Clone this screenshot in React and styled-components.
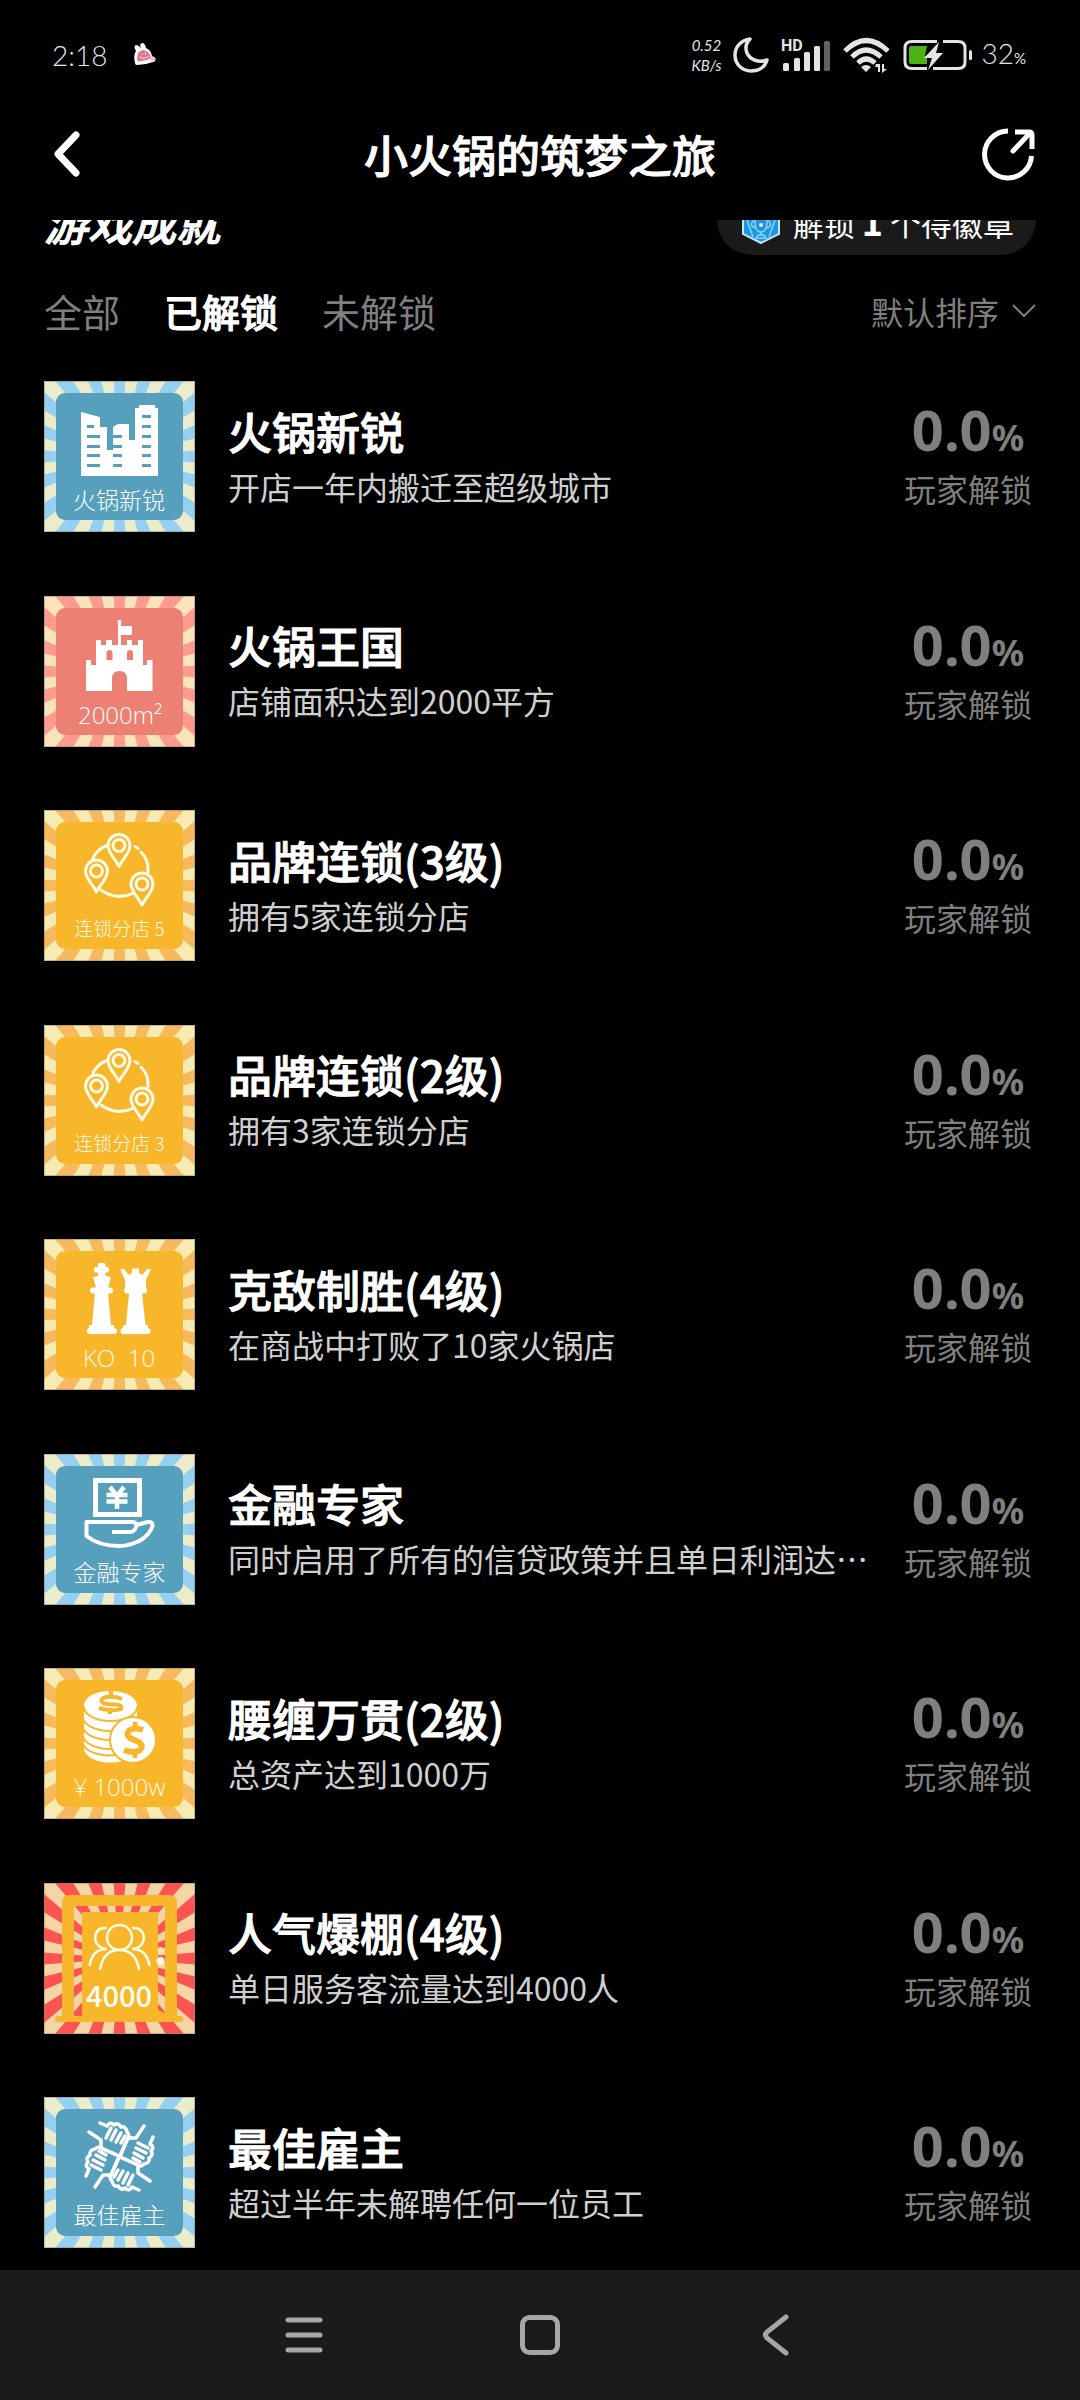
import React from "react";
import styled, { createGlobalStyle, css } from "styled-components";

const CJK = '"Noto Sans CJK SC", sans-serif';

const GlobalStyle = createGlobalStyle`
  * { box-sizing: border-box; }
  body { margin: 0; background: #000; color: #fff; font-family: ${CJK}; }
  button { border: 0; padding: 0; background: none; color: inherit; font: inherit; cursor: pointer; }
  svg { display: block; flex: none; }
`;

const heavy = css`
  font-weight: 500;
  -webkit-text-stroke: 1px currentColor;
`;

const Page = styled.div`
  min-height: 100vh;
  display: flex;
  flex-direction: column;
`;

/* ---------- status bar ---------- */
const StatusBar = styled.div`
  height: 110px;
  padding: 0 54px 0 52px;
  display: flex;
  align-items: center;
  color: #e4e4e4;
  font-family: Lato, sans-serif;
  font-weight: 300;
`;
const Clock = styled.time`
  font-size: 28px;
  line-height: 32px;
  margin-right: 26px;
`;
const StatusIcons = styled.div`
  margin-left: auto;
  display: flex;
  align-items: center;
  gap: 12px;
`;
const Speed = styled.div`
  font-size: 15px;
  line-height: 20px;
  font-style: italic;
  text-align: center;
  font-weight: 400;
`;
const BatteryGroup = styled.div`
  display: flex;
  align-items: center;
  gap: 8px;
`;
const BatteryText = styled.div`
  font-size: 28px;
  line-height: 32px;
  small { font-size: 15px; font-weight: 400; }
`;

/* ---------- title bar ---------- */
const TitleBar = styled.header`
  height: 110px;
  padding: 0 44px 22px;
  display: grid;
  grid-template-columns: 56px 1fr 56px;
  align-items: center;
`;
const Title = styled.h1`
  margin: 0;
  text-align: center;
  font-size: 44px;
  line-height: 64px;
  ${heavy}
`;
const IconButton = styled.button`
  display: flex;
  height: 56px;
  align-items: center;
  justify-content: ${(p) => p.$align};
`;

/* ---------- scrolled content ---------- */
const Scroller = styled.main`
  flex: 1;
  overflow: hidden;
  display: flex;
  flex-direction: column;
  padding: 0 44px 22px;
`;
const SectionHead = styled.div`
  height: 70px;
  margin-top: -35px;
  display: flex;
  align-items: center;
  justify-content: space-between;
`;
const SectionTitle = styled.h2`
  margin: 0;
  padding-top: 4px;
  font-size: 44px;
  line-height: 64px;
  font-style: italic;
  ${heavy}
`;
const BadgePill = styled.button`
  height: 70px;
  padding: 3px 22px 0 25px;
  border-radius: 35px;
  background: #1a1a1a;
  display: flex;
  align-items: center;
  gap: 13px;
  font-size: 31px;
  line-height: 46px;
  white-space: pre;
  b { font-size: 36px; }
`;
const FilterBar = styled.div`
  height: 60px;
  margin: 26px 0 40px;
  display: flex;
  align-items: center;
  justify-content: space-between;
`;
const Tabs = styled.div`
  display: flex;
  gap: 44px;
`;
const Tab = styled.button`
  font-size: 38px;
  line-height: 60px;
  color: #7f7f7f;
  ${(p) => p.$active && css`
    color: #fff;
    ${heavy}
  `}
`;
const SortButton = styled.button`
  display: flex;
  align-items: center;
  gap: 13px;
  font-size: 32px;
  line-height: 46px;
  color: #7f7f7f;
`;
const List = styled.ul`
  flex: 1;
  margin: 0;
  padding: 0;
  list-style: none;
  display: flex;
  flex-direction: column;
  justify-content: space-between;
`;
const Row = styled.li`
  display: grid;
  grid-template-columns: 151px 1fr 136px;
  align-items: center;
`;
const RowText = styled.div`
  min-width: 0;
  padding: 0 28px 6px 33px;
`;
const RowTitle = styled.h3`
  margin: 0;
  font-size: 44px;
  line-height: 64px;
  ${heavy}
`;
const RowDesc = styled.p`
  margin: 0;
  font-size: 32px;
  line-height: 46px;
  color: #cfcfcf;
  white-space: nowrap;
  overflow: hidden;
  text-overflow: ellipsis;
`;
const Rate = styled.div`
  text-align: center;
  color: #7f7f7f;
`;
const RateValue = styled.div`
  font-family: "Noto Sans", sans-serif;
  font-size: 56px;
  line-height: 54px;
  font-weight: 700;
  small { font-size: 36px; }
`;
const RateLabel = styled.div`
  font-size: 32px;
  line-height: 46px;
`;

/* ---------- system navigation ---------- */
const SystemNav = styled.nav`
  height: 130px;
  padding-bottom: 1px;
  background: #1a1a1a;
  display: flex;
  align-items: center;
  justify-content: center;
  gap: 156px;
`;
const NavButton = styled.button`
  width: 80px;
  height: 80px;
  display: flex;
  align-items: center;
  justify-content: center;
`;

/* ---------- achievement badges ---------- */
const THEMES = {
  blue: { ray: "#96d0f1", cream: "#ebecca", panel: "#57a0bd" },
  red: { ray: "#fe9a90", cream: "#f9e4b9", panel: "#eb8073" },
  yellow: { ray: "#f7b95d", cream: "#f8eab3", panel: "#f8b62b" },
  hot: { ray: "#fe5451", cream: "#f5d4a6", panel: null },
};

const point = (deg) => {
  const a = (deg * Math.PI) / 180;
  return `${(75.5 + 120 * Math.sin(a)).toFixed(1)} ${(75.5 - 120 * Math.cos(a)).toFixed(1)}`;
};
const RAYS = Array.from({ length: 20 }, (_, k) => `M75.5 75.5L${point(k * 18 - 4.5)}L${point(k * 18 + 4.5)}Z`).join("");

const BadgeLabel = styled.text`
  font-family: ${(p) => (p.$latin ? '"Open Sans", sans-serif' : CJK)};
  font-size: ${(p) => p.$size}px;
  font-weight: ${(p) => p.$weight || 300};
  fill: ${(p) => p.$fill || "#fff"};
  text-anchor: middle;
  white-space: pre;
`;

function Badge({ theme, children }) {
  const t = THEMES[theme];
  return (
    <svg width="151" height="151" viewBox="0 0 151 151" aria-hidden="true">
      <rect width="151" height="151" fill={t.cream} />
      <path d={RAYS} fill={t.ray} />
      {t.panel && <rect x="12" y="12" width="127" height="127" rx="9" fill={t.panel} />}
      {children}
      <rect x=".5" y=".5" width="150" height="150" fill="none" stroke="#8a8570" strokeOpacity=".5" />
    </svg>
  );
}

const CityBadge = () => (
  <Badge theme="blue">
    <path fill="#fff" d="M37 31L56 36V46H63V69H69V46L74 43H85V59H91V27H95V24H111V27H114V95H37Z" />
    <path
      fill="#57a0bd"
      d="M43 44h7v3h-7zM43 54h13v3H43zM43 64h13v3H43zM43 73h13v3H43zM43 83h13v3H43zM69 54h9v3h-9zM69 64h9v3h-9zM69 73h9v3h-9zM69 83h9v3h-9zM98 34h9v3h-9zM98 44h9v3h-9zM98 54h9v3h-9zM98 64h9v3h-9zM98 73h9v3h-9zM98 83h9v3h-9z"
    />
    <BadgeLabel x="75" y="128" $size={23}>火锅新锐</BadgeLabel>
  </Badge>
);

const CastleBadge = () => (
  <Badge theme="red">
    <path
      fill="#fff"
      d="M42 64H47V69H52V44H57V49H62V44H68V49H74V27Q72 24 75 24Q78 24 77 27V30H88V39H77V49H83V44H88V49H94V44H99V69H103V64H108.500V95H83V83Q83 75 75.500 75T68 83V95H42Z"
    />
    <path fill="#eb8073" d="M62.500 64V57Q62.500 54 65.500 54T68.500 57V64ZM83 64V57Q83 54 86 54T89 57V64Z" />
    <BadgeLabel x="76" y="128" $size={24} $latin>2000m²</BadgeLabel>
  </Badge>
);

const Pin = ({ x, y }) => (
  <g transform={`translate(${x} ${y})`}>
    <path d="M0 21C-3 14-11 8-11 0A11 11 0 0 1 11 0C11 8 3 14 0 21Z" />
    <circle r="6" />
  </g>
);
const ChainBadge = ({ count }) => (
  <Badge theme="yellow">
    <g fill="none" stroke="#fffbe6" strokeWidth="3" strokeLinecap="round" strokeLinejoin="round">
      <path d="M64 35Q51 40 48 51M91 36.500L94 38.500M97 42Q105 50 104 62M57 80Q72 91 90 83" />
      <Pin x={75} y={35.5} />
      <Pin x={52.5} y={61} />
      <Pin x={98} y={74} />
    </g>
    <BadgeLabel x="75.500" y="126" $size={19} $fill="#fffbe6">{`连锁分店 ${count}`}</BadgeLabel>
  </Badge>
);

const ChessBadge = () => (
  <Badge theme="yellow">
    <g fill="#fff">
      <rect x="54" y="24" width="7.500" height="14" rx="2" />
      <rect x="50" y="28" width="15" height="5.500" rx="2" />
      <path d="M49 38Q58 35 67 38L64 49H52Z" />
      <rect x="46" y="48.500" width="23" height="6" rx="3" />
      <path d="M51 54H64L67 86H70V90H45V86H48Z" />
      <rect x="43" y="89" width="30" height="6" rx="3" />
      <path d="M76 30H80L85 36L88 34V29.500H95V34L98 36L103 30H107L102 41V49H81V41Z" />
      <rect x="80" y="48.500" width="23" height="6" rx="3" />
      <path d="M85 54H98L101.500 86H104V90H79V86H82Z" />
      <rect x="76.500" y="89" width="30" height="6" rx="3" />
    </g>
    <BadgeLabel x="75" y="128" $size={24} $latin $fill="#fffbe6">{"KO  10"}</BadgeLabel>
  </Badge>
);

const FinanceBadge = () => (
  <Badge theme="blue">
    <g fill="none" stroke="#fff" strokeWidth="5" strokeLinejoin="round">
      <rect x="51.500" y="26.500" width="44" height="34" strokeLinejoin="miter" />
      <path d="M66 33L73 42L80 33M62.500 41H83.500M62.500 47.500H83.500M73 41V55" strokeWidth="4.500" />
      <path d="M42.500 68H88Q92 68 92.500 71L100 69Q109 66 108.500 72Q106 80 97 86Q86 92 75 92Q55 92 42.500 82ZM92.500 70Q92 78 86 78H68" strokeWidth="4" />
    </g>
    <BadgeLabel x="75.500" y="127" $size={23}>金融专家</BadgeLabel>
  </Badge>
);

const CoinsBadge = () => (
  <Badge theme="yellow">
    <path fill="#fff" d="M40 37A26.500 14 0 0 1 93 37V80A26.500 14 0 0 1 40 81Z" />
    <g fill="none" stroke="#f8b62b" strokeWidth="2">
      <path d="M40 39A26.500 14 0 0 0 93 39M39 49A27 14 0 0 0 93 49M39 58A27 14 0 0 0 93 58M39 67A27 14 0 0 0 93 67M39 76A27 14 0 0 0 72 87" />
    </g>
    <circle cx="89" cy="72" r="23" fill="#fff" stroke="#f8b62b" strokeWidth="2" />
    <g fill="none" stroke="#f8b62b">
      <path strokeWidth="4" d="M78 31Q71 28 62 29Q55 31 59 35Q63 37 71 36.500Q79 37 77 41Q69 44 55 40" />
      <path strokeWidth="4" d="M67 23V29M66 40V46" />
      <path strokeWidth="6" d="M99 62Q91 59 86 62Q81 66 86 70Q90 72 95 74Q100 78 96 82Q90 86 80 82" />
      <path strokeWidth="4.500" d="M91 54V62M91 82V90" />
    </g>
    <BadgeLabel x="75.500" y="128" $size={24} $latin $fill="#fffbe6">¥ 1000w</BadgeLabel>
  </Badge>
);

const CrowdBadge = () => (
  <Badge theme="hot">
    <path
      fill="#f8b62b"
      fillRule="evenodd"
      d="M18 133V20Q18 12 26 12H125Q133 12 133 20V133H137Q139 133 139 136T137 139H13Q11 139 11 136T13 133ZM30 133H38V29H114V127L121 130V23H30Z"
    />
    <circle cx="116.500" cy="67" r="3" fill="#fde5b0" />
    <circle cx="116.500" cy="78" r="4" fill="#fffbe6" />
    <g fill="none" stroke="#fffbe6" strokeWidth="2.500">
      <circle cx="75.500" cy="54.500" r="12.500" />
      <path d="M56 87Q59 67 75.500 67T95 87M63 45Q52 44 51 55Q52 65 63 66Q48 66 45.500 83M88 45Q99 44 100 55Q99 65 88 66Q103 66 105.500 83" />
    </g>
    <BadgeLabel x="75" y="124" $size={29} $weight={500} $fill="#fffef2">4000</BadgeLabel>
  </Badge>
);

const TeamBadge = () => (
  <Badge theme="blue">
    <g fill="none" stroke="#fff" strokeWidth="3.500" strokeLinecap="round" strokeLinejoin="round">
      {[0, 90, 180, 270].map((a) => (
        <path
          key={a}
          transform={`rotate(${a} 75.500 59.500)`}
          d="M56 26L63 29Q66 24 70 28Q74 25 77 30Q82 29 83 35Q87 39 83 43L76 59M45 35L57 43V51L75 59M67 31L62 41M72 33L67 43M77 36L72 45M81 39L77 46"
        />
      ))}
    </g>
    <BadgeLabel x="75.500" y="127" $size={23}>最佳雇主</BadgeLabel>
  </Badge>
);

const ACHIEVEMENTS = [
  { badge: <CityBadge />, title: "火锅新锐", desc: "开店一年内搬迁至超级城市" },
  { badge: <CastleBadge />, title: "火锅王国", desc: "店铺面积达到2000平方" },
  { badge: <ChainBadge count={5} />, title: "品牌连锁(3级)", desc: "拥有5家连锁分店" },
  { badge: <ChainBadge count={3} />, title: "品牌连锁(2级)", desc: "拥有3家连锁分店" },
  { badge: <ChessBadge />, title: "克敌制胜(4级)", desc: "在商战中打败了10家火锅店" },
  { badge: <FinanceBadge />, title: "金融专家", desc: "同时启用了所有的信贷政策并且单日利润达…" },
  { badge: <CoinsBadge />, title: "腰缠万贯(2级)", desc: "总资产达到1000万" },
  { badge: <CrowdBadge />, title: "人气爆棚(4级)", desc: "单日服务客流量达到4000人" },
  { badge: <TeamBadge />, title: "最佳雇主", desc: "超过半年未解聘任何一位员工" },
];

const FILTERS = ["全部", "已解锁", "未解锁"];

/* ---------- small icons ---------- */
const BunnyIcon = () => (
  <svg width="24" height="24" viewBox="0 0 24 24">
    <path fill="#fff" d="M2 20Q0 12 3 8Q0 3 3 2Q6 2 8 6Q6 1 9 0Q12 0 13 5Q18 7 19 13L22 16Q23 19 20 19Q12 22 4 22Q2 22 2 20Z" />
    <path fill="#e0788c" d="M4 16Q4 8 10 7Q17 8 18 15Q12 19 5 18Z" />
    <path fill="none" stroke="#fbd5dc" d="M6 14Q10 17 16 13M8 10L10 12M13 9L12 12" />
    <circle cx="20" cy="16" r="2.500" fill="#f3bfd0" />
  </svg>
);
const MoonIcon = () => (
  <svg width="36" height="38" viewBox="0 0 36 38">
    <path fill="none" stroke="#e4e4e4" strokeWidth="3.500" strokeLinejoin="round" d="M17 3C8 4 2 11 2 19C2 28 9 35 18 35C26 35 32 31 34 24C26 27 17 24 14 17C12 12 13 7 17 3Z" />
  </svg>
);
const HdText = styled.text`
  font: 700 16px Roboto, sans-serif;
`;
const SignalIcon = () => (
  <svg width="50" height="34" viewBox="0 0 50 34" fill="#e4e4e4">
    <HdText x="0" y="13">HD</HdText>
    <rect x="2" y="25" width="6" height="8" rx="1.500" />
    <rect x="13" y="20" width="6" height="13" rx="1.500" />
    <rect x="23" y="14" width="6" height="19" rx="1.500" />
    <rect x="33" y="8" width="6" height="25" rx="1.500" />
    <rect x="43" y="3" width="6" height="30" rx="1.500" fill="#626262" />
  </svg>
);
const WifiIcon = () => (
  <svg width="48" height="36" viewBox="0 0 48 36">
    <g fill="none" stroke="#e4e4e4" strokeWidth="5">
      <path d="M2 14Q23 -7 45 14M9 20Q23 6 38 20M15 26Q23 18 32 26" />
    </g>
    <path fill="#e4e4e4" d="M23 35L18 30Q23 26 28 30ZM33 27L37 27V35H35V30H32ZM39 27H41V32H44L39 36Z" />
  </svg>
);
const BatteryIcon = () => (
  <svg width="70" height="32" viewBox="0 0 70 32">
    <path fill="none" stroke="#e4e4e4" strokeWidth="3" d="M34 2.500H9Q2 2.500 2 9V23Q2 29.500 9 29.500H24M40 2.500H55Q62 2.500 62 9V23Q62 29.500 55 29.500H30" />
    <path fill="#4eb211" d="M8 7H24L22 17H24V25H8Q6 25 6 23V9Q6 7 8 7Z" />
    <path fill="#e4e4e4" d="M36 3L21 19H29L25 31L40 14H33Z" />
    <rect x="66" y="11" width="3" height="10" rx="1.500" fill="#e4e4e4" />
  </svg>
);
const ShieldIcon = () => (
  <svg width="38" height="44" viewBox="0 0 38 44">
    <path fill="#1d97e4" stroke="#bfe6fb" strokeWidth="2" d="M19 1L37 10V34L19 43L1 34V10Z" />
    <path fill="none" stroke="#8ed3f7" strokeWidth="1.500" d="M5 20L11 37M33 20L27 37M13 17H25Q26 32 19 32T13 17ZM12 20Q6 26 14 28M26 20Q32 26 24 28M19 32V35M14 38H24L22 35H16Z" />
    <circle cx="19" cy="25" r="2" fill="#d6f0fd" />
  </svg>
);

export default function App() {
  return (
    <Page>
      <GlobalStyle />
      <StatusBar>
        <Clock>2:18</Clock>
        <BunnyIcon />
        <StatusIcons>
          <Speed>
            <div>0.52</div>
            <div>KB/s</div>
          </Speed>
          <MoonIcon />
          <SignalIcon />
          <WifiIcon />
          <BatteryGroup>
            <BatteryIcon />
            <BatteryText>
              32<small>%</small>
            </BatteryText>
          </BatteryGroup>
        </StatusIcons>
      </StatusBar>

      <TitleBar>
        <IconButton $align="flex-start" aria-label="返回">
          <svg width="40" height="48" viewBox="0 0 40 48">
            <path fill="none" stroke="#fff" strokeWidth="7" strokeLinecap="round" strokeLinejoin="round" d="M32 5L14 24L32 43" />
          </svg>
        </IconButton>
        <Title>小火锅的筑梦之旅</Title>
        <IconButton $align="flex-end" aria-label="分享">
          <svg width="54" height="54" viewBox="0 0 54 54">
            <g fill="none" stroke="#fff" strokeWidth="5">
              <path d="M26 4A23.500 23.500 0 1 0 49.500 29" />
              <path d="M31 24L48 6" strokeLinecap="round" />
              <path d="M33 5H47Q50 5 50 8V22" strokeLinejoin="round" />
            </g>
          </svg>
        </IconButton>
      </TitleBar>

      <Scroller>
        <SectionHead>
          <SectionTitle>游戏成就</SectionTitle>
          <BadgePill>
            <ShieldIcon />
            <span>
              解锁 <b>1</b> 个得徽章
            </span>
          </BadgePill>
        </SectionHead>

        <FilterBar>
          <Tabs role="tablist">
            {FILTERS.map((name, i) => (
              <Tab key={name} role="tab" aria-selected={i === 1} $active={i === 1}>
                {name}
              </Tab>
            ))}
          </Tabs>
          <SortButton>
            默认排序
            <svg width="24" height="16" viewBox="0 0 24 16">
              <path fill="none" stroke="#7f7f7f" strokeWidth="2" d="M1 2L12 13L23 2" />
            </svg>
          </SortButton>
        </FilterBar>

        <List>
          {ACHIEVEMENTS.map((item) => (
            <Row key={item.title}>
              {item.badge}
              <RowText>
                <RowTitle>{item.title}</RowTitle>
                <RowDesc>{item.desc}</RowDesc>
              </RowText>
              <Rate>
                <RateValue>
                  0.0<small>%</small>
                </RateValue>
                <RateLabel>玩家解锁</RateLabel>
              </Rate>
            </Row>
          ))}
        </List>
      </Scroller>

      <SystemNav>
        <NavButton aria-label="菜单">
          <svg width="40" height="40" viewBox="0 0 40 40">
            <path stroke="#a6a6a6" strokeWidth="5" strokeLinecap="round" d="M4 5H36M4 20H36M4 35H36" />
          </svg>
        </NavButton>
        <NavButton aria-label="主页">
          <svg width="42" height="42" viewBox="0 0 42 42">
            <rect x="3.500" y="3.500" width="35" height="35" rx="7" fill="none" stroke="#a6a6a6" strokeWidth="5" />
          </svg>
        </NavButton>
        <NavButton aria-label="返回上一页">
          <svg width="28" height="42" viewBox="0 0 28 42">
            <path fill="none" stroke="#a6a6a6" strokeWidth="5" strokeLinecap="round" d="M24 3L5 18Q2 21 5 24L24 39" />
          </svg>
        </NavButton>
      </SystemNav>
    </Page>
  );
}
